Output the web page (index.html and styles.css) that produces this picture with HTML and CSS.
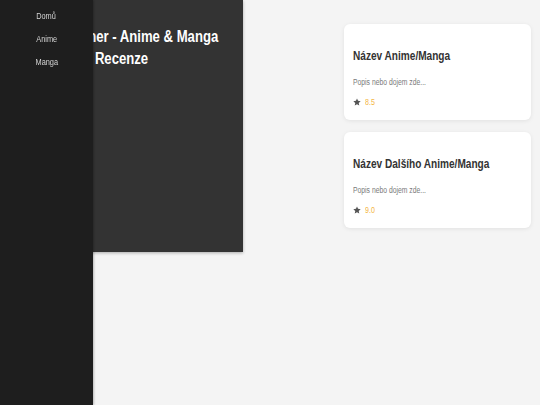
FILE: index.html
```html
<!DOCTYPE html>
<html lang="cs">
<head>
<meta charset="utf-8">
<title>Otaku Corner - Anime &amp; Manga Recenze</title>
<link rel="stylesheet" href="styles.css">
</head>
<body>
<nav class="sidebar">
  <ul class="nav-list">
    <li class="nav-item"><a href="#" class="nav-link">Domů</a></li>
    <li class="nav-item"><a href="#" class="nav-link">Anime</a></li>
    <li class="nav-item"><a href="#" class="nav-link">Manga</a></li>
  </ul>
</nav>
<div class="layout">
  <header class="hero">
    <h1 class="hero-title">Otaku Corner - Anime &amp; Manga Recenze</h1>
  </header>
  <main class="content">
    <article class="card">
      <h2 class="card-title">Název Anime/Manga</h2>
      <p class="card-text">Popis nebo dojem zde...</p>
      <div class="rating">
        <svg class="star" viewBox="0 0 24 24" width="8" height="8"><path d="M12 1.5l3.2 7.1 7.8.8-5.8 5.3 1.6 7.7L12 18.5l-6.8 3.9 1.6-7.7L1 9.4l7.8-.8z" fill="#555"/></svg>
        <span class="score">8.5</span>
      </div>
    </article>
    <article class="card">
      <h2 class="card-title">Název Dalšího Anime/Manga</h2>
      <p class="card-text">Popis nebo dojem zde...</p>
      <div class="rating">
        <svg class="star" viewBox="0 0 24 24" width="8" height="8"><path d="M12 1.5l3.2 7.1 7.8.8-5.8 5.3 1.6 7.7L12 18.5l-6.8 3.9 1.6-7.7L1 9.4l7.8-.8z" fill="#555"/></svg>
        <span class="score">9.0</span>
      </div>
    </article>
  </main>
</div>
</body>
</html>
```

FILE: styles.css
```css
html, body {
  margin: 0;
  padding: 0;
}
body {
  background: #f4f4f4;
  font-family: "Liberation Sans", Arial, sans-serif;
  color: #333;
  min-height: 405px;
}
.sidebar {
  position: fixed;
  left: 0;
  top: 0;
  bottom: 0;
  width: 93px;
  background: #1e1e1e;
  box-shadow: 1px 0 2px rgba(0,0,0,0.25);
  z-index: 10;
}
.nav-list {
  list-style: none;
  margin: 0;
  padding: 11px 0 0;
  text-align: center;
  display: flex;
  flex-direction: column;
  gap: 12px;
}
.nav-item {
  font-size: 9px;
  line-height: 11px;
  height: 11px;
}
.nav-link {
  display: inline-block;
  color: #d4d4d4;
  text-decoration: none;
  transform: scaleX(0.82);
}
.layout {
  display: flex;
  align-items: flex-start;
}
.hero {
  width: 243px;
  height: 252px;
  flex: none;
  box-sizing: border-box;
  padding: 26px 10px 0;
  background: #333;
  box-shadow: 0 1px 3px rgba(0,0,0,0.3);
}
.hero-title {
  width: 272px;
  margin: 0;
  color: #fff;
  font-size: 16px;
  line-height: 22px;
  font-weight: bold;
  text-align: center;
  transform: scaleX(0.82);
  transform-origin: left top;
}
.content {
  flex: 1;
  padding: 24px 9px 0 101px;
  display: flex;
  flex-direction: column;
  gap: 12px;
}
.card {
  background: #fff;
  border-radius: 6px;
  box-shadow: 0 1px 4px rgba(0,0,0,0.08);
  padding: 24px 9px 12px;
}
.card-title {
  margin: 0 0 12px;
  font-size: 12.3px;
  line-height: 16px;
  font-weight: bold;
  color: #333;
  white-space: nowrap;
  transform: scaleX(0.82);
  transform-origin: left top;
}
.card-text {
  margin: 0 0 8px;
  font-size: 8.3px;
  line-height: 12px;
  color: #7a7a7a;
  white-space: nowrap;
  transform: scaleX(0.82);
  transform-origin: left top;
}
.rating {
  display: flex;
  align-items: center;
  gap: 4px;
  font-size: 8.6px;
  line-height: 12px;
}
.star {
  display: block;
}
.score {
  display: inline-block;
  color: #f4b63f;
  transform: scaleX(0.82);
  transform-origin: left center;
}
```
